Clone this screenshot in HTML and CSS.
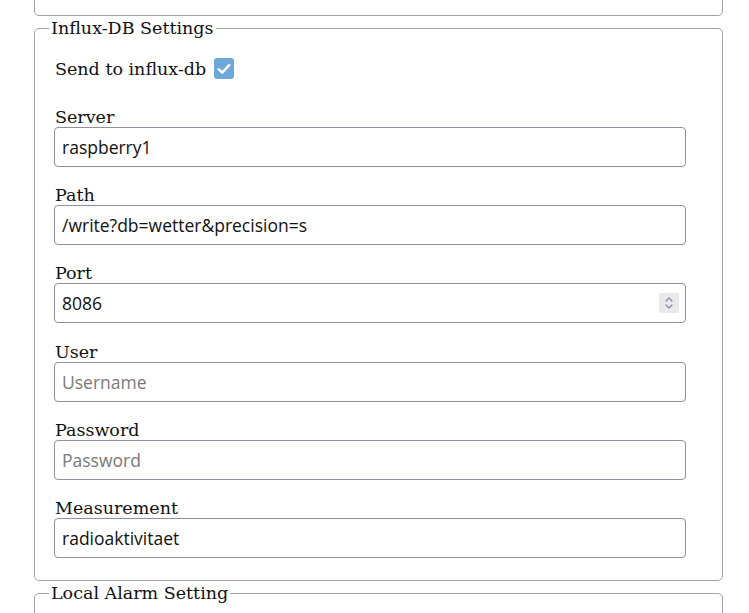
FILE: index.html
```html
<!DOCTYPE html>
<html lang="en">
<head>
<meta charset="utf-8">
<title>Settings</title>
<link rel="stylesheet" href="styles.css">
</head>
<body>
<div class="page">
  <div class="prev-card"></div>

  <fieldset class="card">
    <legend class="card-title">Influx-DB Settings</legend>
    <div class="card-body">
      <label class="check-row">
        <span>Send to influx-db</span>
        <span class="check-box" role="checkbox" aria-checked="true">
          <svg width="14" height="12" viewBox="0 0 14 12"><path d="M1.8 6.4 L5.2 9.6 L12.2 2.2" fill="none" stroke="#fff" stroke-width="2.6" stroke-linecap="round" stroke-linejoin="round"/></svg>
        </span>
      </label>

      <div class="group first">
        <label class="lbl" for="server">Server</label>
        <input class="inp" id="server" type="text" value="raspberry1">
      </div>
      <div class="group">
        <label class="lbl" for="path">Path</label>
        <input class="inp" id="path" type="text" value="/write?db=wetter&amp;precision=s">
      </div>
      <div class="group">
        <label class="lbl" for="port">Port</label>
        <div class="num-field">
          <input class="num-inp" id="port" type="text" inputmode="numeric" value="8086">
          <span class="spin">
            <svg width="10" height="16" viewBox="0 0 10 16"><path d="M2 6 L5 3 L8 6 M2 10 L5 13 L8 10" fill="none" stroke="#8b8b98" stroke-width="1.3" stroke-linecap="round" stroke-linejoin="round"/></svg>
          </span>
        </div>
      </div>
      <div class="group">
        <label class="lbl" for="user">User</label>
        <input class="inp" id="user" type="text" placeholder="Username">
      </div>
      <div class="group">
        <label class="lbl" for="pass">Password</label>
        <input class="inp" id="pass" type="password" placeholder="Password">
      </div>
      <div class="group">
        <label class="lbl" for="meas">Measurement</label>
        <input class="inp" id="meas" type="text" value="radioaktivitaet">
      </div>
    </div>
  </fieldset>

  <fieldset class="card">
    <legend class="card-title">Local Alarm Setting</legend>
    <div class="card-body short"></div>
  </fieldset>
</div>
</body>
</html>
```

FILE: styles.css
```css
html, body {
  margin: 0;
  padding: 0;
  background: #ffffff;
  overflow: hidden;
}

body {
  font-family: "DejaVu Serif", serif;
  font-size: 17.5px;
  color: #111;
}

.page {
  padding-left: 34px;
  width: 689px;
  display: flex;
  flex-direction: column;
}

.prev-card {
  box-sizing: border-box;
  height: 60px;
  margin-top: -44px;
  border: 1px solid #a3a3a3;
  border-radius: 5px;
}

.card {
  margin: 3px 0 0 0;
  padding: 0;
  min-width: 0;
  border: 1px solid #a3a3a3;
  border-radius: 5px;
}

.card-title {
  margin-left: 14px;
  padding: 0 2px;
  line-height: 19px;
  font-family: "DejaVu Serif", serif;
  font-size: 17.5px;
  color: #111;
}

.card-body {
  padding: 20px 19px 22px 19px;
  display: flex;
  flex-direction: column;
}

.card-body.short {
  height: 60px;
}

.check-row {
  display: flex;
  align-items: center;
  gap: 8px;
  height: 21px;
  padding-left: 1px;
}

.check-box {
  width: 20px;
  height: 21px;
  border-radius: 3px;
  background: #6ea8d8;
  display: flex;
  align-items: center;
  justify-content: center;
}

.group {
  display: flex;
  flex-direction: column;
  margin-top: 19.2px;
}

.group.first {
  margin-top: 29px;
}

.lbl {
  display: block;
  line-height: 19px;
  padding-left: 1px;
  color: #111;
}

.inp,
.num-field {
  box-sizing: border-box;
  width: 632px;
  height: 40px;
  border: 1px solid #8f8f9d;
  border-radius: 4px;
  background: #fff;
}

.inp {
  margin: 0;
  padding: 0 7px;
  font-family: "Open Sans", sans-serif;
  font-size: 17.5px;
  color: #111;
  outline: none;
}

.inp::placeholder {
  color: #7a7a7a;
  opacity: 1;
}

.num-field {
  display: flex;
  align-items: center;
  padding-right: 6px;
}

.num-inp {
  flex: 1;
  min-width: 0;
  height: 100%;
  margin: 0;
  border: none;
  padding: 0 7px;
  background: transparent;
  font-family: "Open Sans", sans-serif;
  font-size: 17.5px;
  color: #111;
  outline: none;
}

.spin {
  width: 20px;
  height: 20px;
  background: #e9e9ed;
  border-radius: 2px;
  display: flex;
  align-items: center;
  justify-content: center;
}
```
